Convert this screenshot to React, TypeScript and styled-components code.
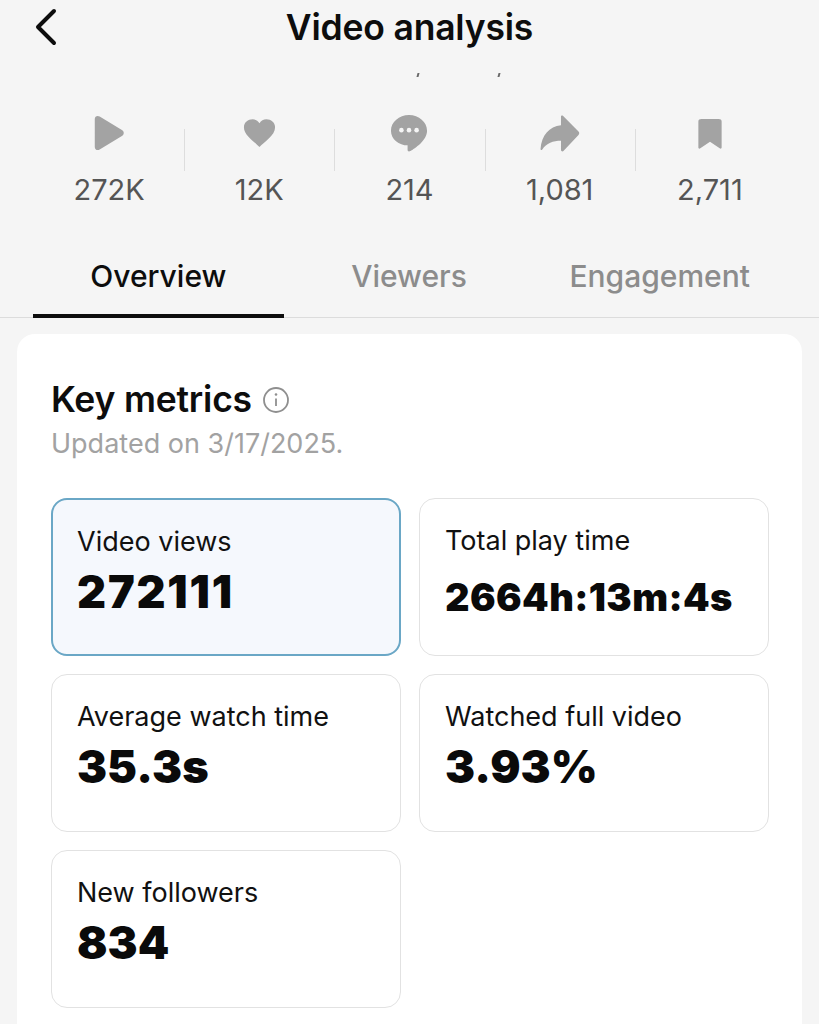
import styled, { createGlobalStyle } from "styled-components";

const GlobalStyle = createGlobalStyle`
  html, body {
    margin: 0;
    padding: 0;
    height: 1024px;
    overflow: hidden;
    background: #f5f5f5;
    font-family: Inter, "Liberation Sans", sans-serif;
  }
  * { box-sizing: border-box; }
`;

const Page = styled.div`
  width: 819px;
  height: 1024px;
  overflow: hidden;
  display: flex;
  flex-direction: column;
`;

const Header = styled.header`
  height: 108px;
  padding-top: 5px;
  position: relative;
  display: flex;
  flex-direction: column;
  align-items: center;
`;

const BackButton = styled.button`
  position: absolute;
  left: 33px;
  top: 8px;
  padding: 0;
  border: none;
  background: none;
  display: flex;
`;

const Title = styled.h1`
  margin: 0;
  font-size: 35.5px;
  line-height: 46px;
  font-weight: 600;
  letter-spacing: -0.2px;
  color: #0d0d0d;
`;

const Specks = styled.div`
  margin: 22px 0 0 98px;
  display: flex;
  gap: 79px;
`;

const Speck = styled.span`
  width: 2px;
  height: 4px;
  background: #6a6a6a;
  transform: skewX(-15deg);
`;

const Stats = styled.div`
  margin: 0 34px;
  display: grid;
  grid-template-columns: repeat(5, 1fr);
  height: 110px;
`;

const Stat = styled.div<{ $first?: boolean }>`
  position: relative;
  display: flex;
  flex-direction: column;
  align-items: center;
  &::before {
    content: "";
    display: ${(props) => (props.$first ? "none" : "block")};
    position: absolute;
    left: 0;
    top: 21px;
    height: 42px;
    width: 1px;
    background: #dddddd;
  }
`;

const StatIcon = styled.div`
  height: 50px;
  display: flex;
  align-items: center;
  justify-content: center;
`;

const StatValue = styled.div`
  margin-top: 14px;
  font-size: 29px;
  line-height: 36px;
  font-weight: 400;
  color: #555555;
`;

const Tabs = styled.nav`
  margin-top: 31px;
  height: 69px;
  padding: 0 34px 0 33px;
  display: grid;
  grid-template-columns: repeat(3, 1fr);
  border-bottom: 1px solid #dcdcdc;
`;

const Tab = styled.div<{ $active?: boolean }>`
  display: flex;
  justify-content: center;
  padding-top: 7px;
  font-size: 30px;
  line-height: 40px;
  font-weight: 500;
  color: ${(props) => (props.$active ? "#0d0d0d" : "#8c8c8c")};
  border-bottom: 4px solid ${(props) => (props.$active ? "#0d0d0d" : "transparent")};
  height: 69px;
`;

const Card = styled.section`
  margin: 16px 17px 0;
  flex: 1;
  padding: 41px 33px 0 34px;
  background: #ffffff;
  border-radius: 18px 18px 0 0;
`;

const CardTitleRow = styled.div`
  display: flex;
  align-items: center;
  gap: 10px;
`;

const CardTitle = styled.h2`
  margin: 0;
  font-size: 35.5px;
  line-height: 50px;
  font-weight: 600;
  letter-spacing: -0.2px;
  color: #0d0d0d;
`;

const Updated = styled.div`
  margin-top: 1px;
  font-size: 27px;
  line-height: 36px;
  color: #a2a2a2;
`;

const MetricGrid = styled.div`
  margin-top: 36px;
  display: grid;
  grid-template-columns: 350px 350px;
  grid-auto-rows: 158px;
  gap: 18px;
`;

const Metric = styled.div<{ $selected?: boolean }>`
  padding: ${(props) => (props.$selected ? "25px 24px 0" : "25px 25px 0")};
  border-radius: 16px;
  border: ${(props) =>
    props.$selected ? "2px solid #6aa7c6" : "1.5px solid #e2e2e2"};
  background: ${(props) => (props.$selected ? "#f5f8fd" : "#ffffff")};
`;

const MetricLabel = styled.div`
  font-size: 27px;
  line-height: 34px;
  color: #111111;
`;

const MetricValue = styled.div<{ $small?: boolean; $tracking?: number }>`
  margin-top: ${(props) => (props.$small ? "15px" : "5px")};
  font-size: ${(props) => (props.$small ? "38px" : "45px")};
  line-height: ${(props) => (props.$small ? "48px" : "56px")};
  letter-spacing: ${(props) => props.$tracking ?? 0}px;
  font-weight: 900;
  color: #0a0a0a;
`;

const stats = [
  {
    value: "272K",
    icon: (
      <svg width="32" height="36" viewBox="0 0 36 40" preserveAspectRatio="none">
        <path d="M2 4.500C2 1.500 5 0 7.500 1.800L33 17c2.200 1.400 2.200 4.600 0 6L7.500 38.200C5 40 2 38.500 2 35.500Z" fill="#a3a3a3" />
      </svg>
    ),
  },
  {
    value: "12K",
    icon: (
      <svg width="33" height="30" viewBox="0 0 36 34" preserveAspectRatio="none">
        <path d="M18 33C13 27 1 20 1 10.500C1 5 5.500 1.500 10.500 1.500C13.500 1.500 16.500 3 18 6C19.500 3 22.500 1.500 25.500 1.500C30.500 1.500 35 5 35 10.500C35 20 23 27 18 33Z" fill="#a3a3a3" />
      </svg>
    ),
  },
  {
    value: "214",
    icon: (
      <svg width="38" height="38" viewBox="0 0 40 40">
        <path d="M20 1C9.500 1 1 8.500 1 17.500C1 26.500 9.500 33 18.500 33L18.500 38C18.500 39.500 20 40 21.500 39C26 36 39 28 39 17.500C39 8.500 30.500 1 20 1Z" fill="#a3a3a3" />
        <circle cx="12" cy="17" r="2.400" fill="#f5f5f5" />
        <circle cx="20" cy="17" r="2.400" fill="#f5f5f5" />
        <circle cx="28" cy="17" r="2.400" fill="#f5f5f5" />
      </svg>
    ),
  },
  {
    value: "1,081",
    icon: (
      <svg width="40" height="37" viewBox="0 0 40 38">
        <path d="M21 1.500C21 .5 22.200 0 23 .8L39 17c1 1 1 2.500 0 3.500L23.500 37c-.8.8-2.500.3-2.500-1V26.500C13 26.500 6 29 1.800 35.500C1 36.500 0 36 0 35C1 21 9 11.500 21 10.500Z" fill="#a3a3a3" />
      </svg>
    ),
  },
  {
    value: "2,711",
    icon: (
      <svg width="26" height="31" viewBox="0 0 26 32">
        <path d="M1 3.500C1 1.800 2.300 1 4 1H22C23.700 1 25 1.800 25 3.500V30.500C25 31.500 24 32 23 31.300L13 24.500L3 31.300C2 32 1 31.500 1 30.500Z" fill="#a3a3a3" />
      </svg>
    ),
  },
];

const metrics = [
  { label: "Video views", value: "272111", selected: true, tracking: 1.8 },
  { label: "Total play time", value: "2664h:13m:4s", small: true, tracking: 0.4 },
  { label: "Average watch time", value: "35.3s" },
  { label: "Watched full video", value: "3.93%" },
  { label: "New followers", value: "834" },
];

export default function App() {
  return (
    <Page>
      <GlobalStyle />
      <Header>
        <BackButton aria-label="Back">
          <svg width="26" height="38" viewBox="0 0 26 38" fill="none">
            <path d="M21 3L5 19L21 35" stroke="#0d0d0d" strokeWidth="4" strokeLinecap="round" strokeLinejoin="round" />
          </svg>
        </BackButton>
        <Title>Video analysis</Title>
        <Specks>
          <Speck />
          <Speck />
        </Specks>
      </Header>

      <Stats>
        {stats.map((stat, i) => (
          <Stat key={stat.value} $first={i === 0}>
            <StatIcon>{stat.icon}</StatIcon>
            <StatValue>{stat.value}</StatValue>
          </Stat>
        ))}
      </Stats>

      <Tabs>
        <Tab $active>Overview</Tab>
        <Tab>Viewers</Tab>
        <Tab>Engagement</Tab>
      </Tabs>

      <Card>
        <CardTitleRow>
          <CardTitle>Key metrics</CardTitle>
          <svg width="28" height="28" viewBox="0 0 28 28" fill="none">
            <circle cx="14" cy="14" r="12" stroke="#8f8f8f" strokeWidth="1.800" />
            <circle cx="14" cy="8.500" r="1.300" fill="#8f8f8f" />
            <path d="M14 12.500V20" stroke="#8f8f8f" strokeWidth="1.800" />
          </svg>
        </CardTitleRow>
        <Updated>Updated on 3/17/2025.</Updated>
        <MetricGrid>
          {metrics.map((metric) => (
            <Metric key={metric.label} $selected={metric.selected}>
              <MetricLabel>{metric.label}</MetricLabel>
              <MetricValue $small={metric.small} $tracking={metric.tracking}>
                {metric.value}
              </MetricValue>
            </Metric>
          ))}
        </MetricGrid>
      </Card>
    </Page>
  );
}
